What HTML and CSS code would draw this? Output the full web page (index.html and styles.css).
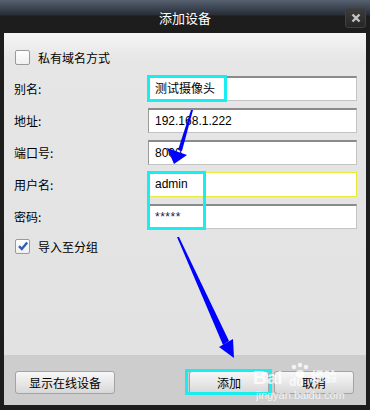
FILE: index.html
```html
<!DOCTYPE html>
<html lang="zh-CN">
<head>
  <meta charset="UTF-8">
  <title>添加设备</title>
  <link rel="stylesheet" href="styles.css">
</head>
<body>
  <div class="window">
    <div class="titlebar">
      <span class="title">添加设备</span>
      <span class="close">
        <svg width="10" height="10" viewBox="0 0 10 10"><path d="M1.5 1.5 L8.5 8.5 M8.5 1.5 L1.5 8.5" stroke="#c4c4c4" stroke-width="2.4"/></svg>
      </span>
    </div>
    <div class="content">
      <label class="check-row"><span class="box"></span>私有域名方式</label>
      <div class="field"><span class="lbl">别名:</span><div class="input">测试摄像头</div></div>
      <div class="field"><span class="lbl">地址:</span><div class="input">192.168.1.222</div></div>
      <div class="field"><span class="lbl">端口号:</span><div class="input">8000</div></div>
      <div class="field"><span class="lbl">用户名:</span><div class="input focus">admin</div></div>
      <div class="field"><span class="lbl">密码:</span><div class="input pwd">*****</div></div>
      <label class="check-row checked">
        <span class="box">
          <svg width="12" height="12" viewBox="0 0 12 12"><path d="M2 6.2 L4.8 9 L10.2 2.6" fill="none" stroke="#2b5fb0" stroke-width="2.4"/></svg>
        </span>导入至分组
      </label>
    </div>
    <div class="footer">
      <button type="button" class="btn wide">显示在线设备</button>
      <div class="actions">
        <button type="button" class="btn">添加</button>
        <button type="button" class="btn">取消</button>
      </div>
    </div>

    <!-- annotation layer: highlight boxes, arrows, watermark -->
    <svg class="marks" width="370" height="410" viewBox="0 0 370 410">
      <g fill="none" stroke="#18eef0" stroke-width="3">
        <rect x="148.5" y="76.5" width="77" height="24"/>
        <rect x="148.5" y="172.5" width="56" height="56"/>
        <rect x="186.5" y="370.5" width="84" height="23"/>
      </g>
      <g fill="#0000ff">
        <polygon points="191,110 193,110 182,151 178,150"/>
        <polygon points="167,148 187,155 174,164"/>
        <polygon points="177,237 179,237 229,341 223,345"/>
        <polygon points="219,347 233,339 234,358"/>
      </g>
      <g class="wm">
        <text x="253" y="384" class="wm-big">Bai</text>
        <circle cx="294" cy="367" r="2.3"/><circle cx="300" cy="365" r="2.3"/><circle cx="306" cy="367" r="2.3"/>
        <ellipse cx="300" cy="374" rx="4.5" ry="4"/>
        <text x="289" y="386" class="wm-mid">du</text>
        <text x="311" y="381" class="wm-cn">经验</text>
        <text x="256" y="399" class="wm-small">jingyan.baidu.com</text>
      </g>
    </svg>
  </div>
</body>
</html>
```

FILE: styles.css
```css
* { box-sizing: border-box; }
body {
  margin: 0;
  font-family: "Noto Sans CJK SC", "Liberation Sans", sans-serif;
  font-size: 12px;
  color: #000;
}
.window {
  position: relative;
  width: 370px;
  height: 410px;
  background: #1d1d1d;
  padding: 0 4px 5px 4px;
  display: flex;
  flex-direction: column;
}
.titlebar {
  position: relative;
  height: 33px;
  margin: 0 -4px;
  background: linear-gradient(to bottom, #56606e 0, #3c4552 8px, #282d34 15px, #1d1d1d 16px, #1d1d1d 100%);
  text-align: center;
  line-height: 36px;
  color: #fff;
  font-size: 13px;
}
.close {
  position: absolute;
  right: 4px;
  top: 8px;
  width: 21px;
  height: 20px;
  border: 1px solid #404040;
  border-radius: 3px;
  background: linear-gradient(#3c3c3c, #262626);
  display: flex;
  align-items: center;
  justify-content: center;
}
.content {
  height: 322px;
  background: linear-gradient(#f5f5f5 0, #e6e6e6 26px, #e2e2e2 100%);
  padding: 17px 9px 0 10px;
  display: flex;
  flex-direction: column;
}
.check-row {
  display: flex;
  align-items: center;
  height: 14px;
  gap: 8px;
  padding-left: 1px;
}
.check-row:first-child {
  margin-bottom: 12px;
}
.check-row.checked {
  margin-top: 10px;
}
.box {
  width: 15px;
  height: 15px;
  border: 1px solid #9a9a9a;
  border-radius: 2px;
  background: linear-gradient(#ffffff, #f0f0f0);
  display: flex;
  align-items: center;
  justify-content: center;
}
.field {
  display: flex;
  align-items: center;
  height: 25px;
  margin-bottom: 7px;
}
.field:nth-child(6) {
  margin-bottom: 0;
}
.lbl {
  width: 134px;
}
.input {
  flex: 1;
  height: 25px;
  background: #fff;
  border: 1px solid #c4c4c4;
  border-top: 2px solid #8a8a8a;
  border-left-color: #9a9a9a;
  padding-left: 6px;
  line-height: 22px;
  font-family: "Liberation Sans", "Noto Sans CJK SC", sans-serif;
  font-size: 12px;
}
.input.focus {
  border: 1px solid #ece83a;
  line-height: 23px;
}
.input.pwd {
  letter-spacing: 0.5px;
  color: #1a1a4a;
}
.footer {
  flex: 1;
  background: #cdcdcd;
  display: flex;
  justify-content: space-between;
  align-items: flex-start;
  padding: 16px 12px 0 11px;
}
.actions {
  display: flex;
  gap: 5px;
}
.btn {
  width: 80px;
  height: 23px;
  border: 1px solid #a3a3a3;
  border-radius: 3px;
  background: linear-gradient(#f7f7f7, #e8e8e8 50%, #d8d8d8);
  font-family: "Noto Sans CJK SC", sans-serif;
  font-size: 12px;
  color: #000;
  padding: 0;
}
.btn.wide {
  width: 100px;
}
.marks {
  position: absolute;
  left: 0;
  top: 0;
  pointer-events: none;
}
.wm {
  fill: rgba(255, 255, 255, 0.75);
  font-family: "Liberation Sans", "Noto Sans CJK SC", sans-serif;
}
.wm-big {
  font-size: 19px;
  font-weight: bold;
}
.wm-mid {
  font-size: 12px;
  font-weight: bold;
}
.wm-cn {
  font-size: 13px;
  font-weight: bold;
}
.wm-small {
  font-size: 11px;
}
```
